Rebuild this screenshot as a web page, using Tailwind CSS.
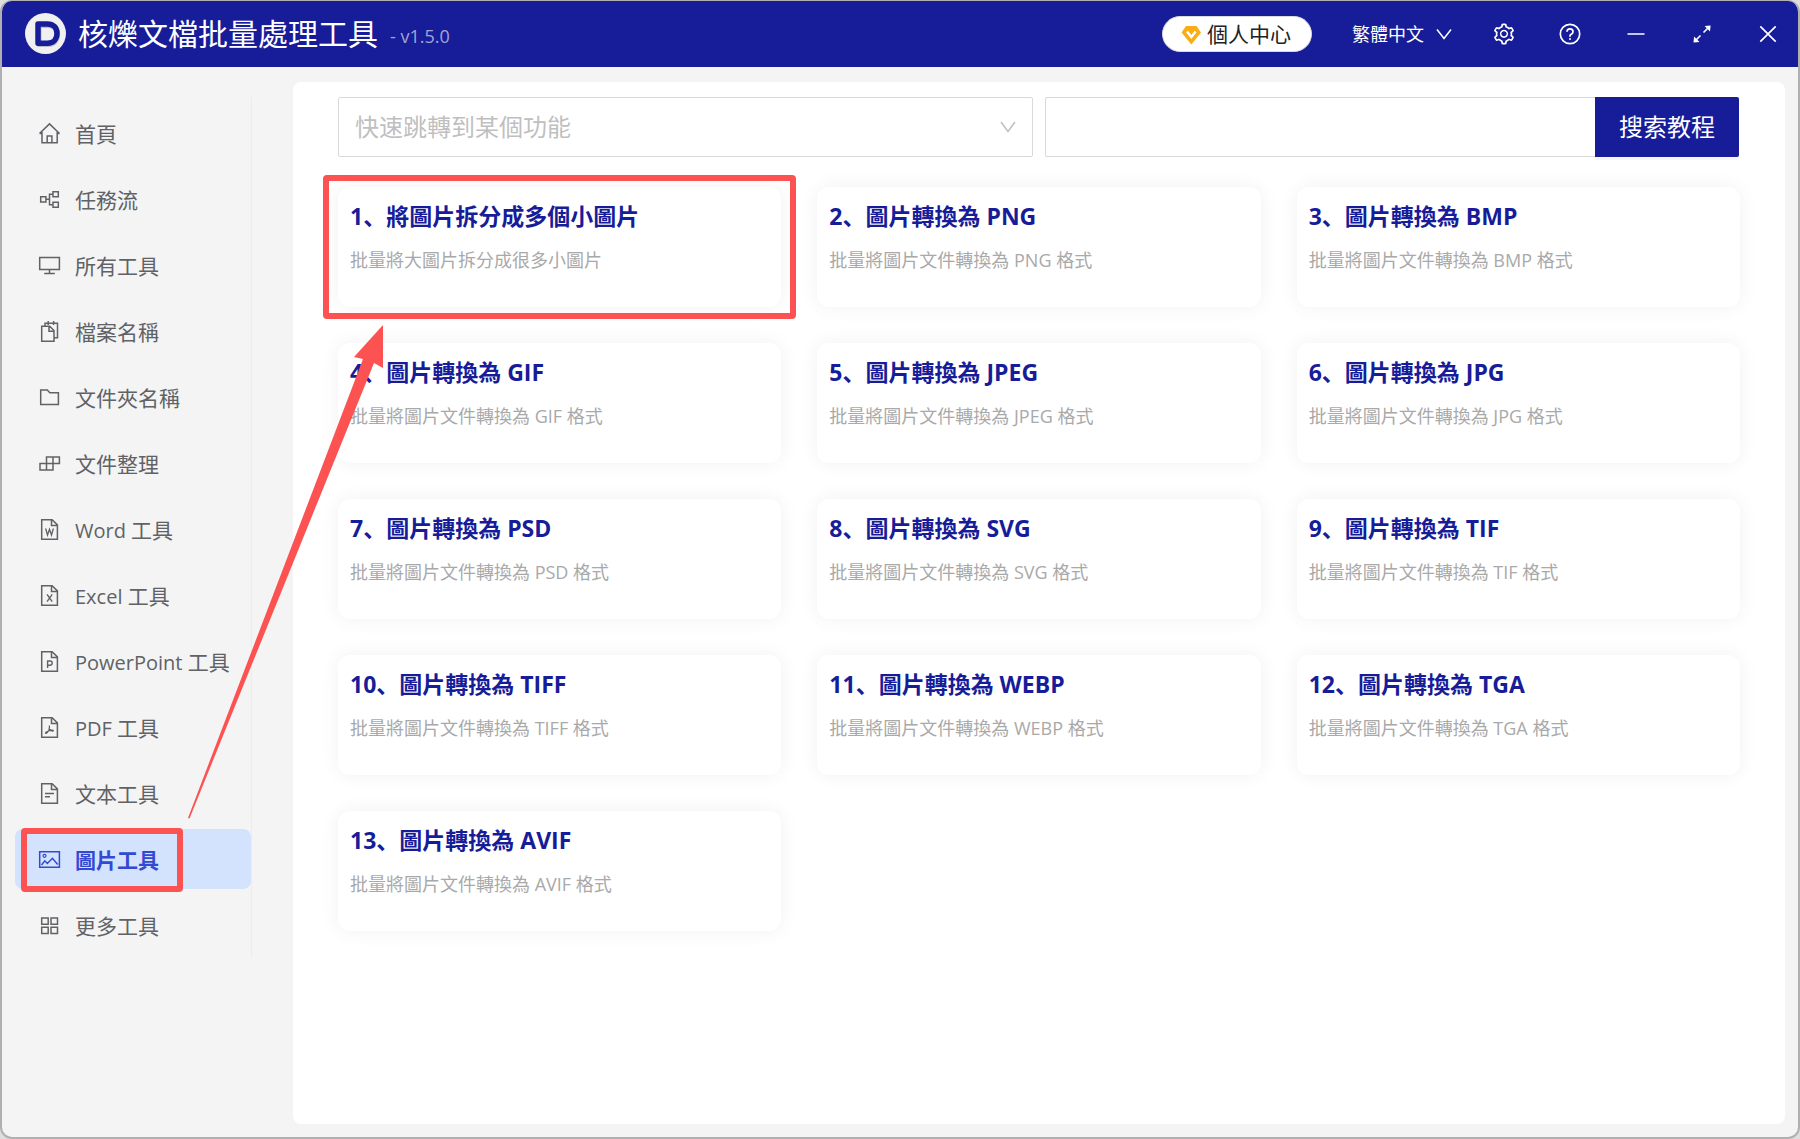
<!DOCTYPE html>
<html lang="zh-CN">
<head>
<meta charset="utf-8">
<meta name="viewport" content="width=device-width, initial-scale=1">
<title>核爍文檔批量處理工具</title>
<script src="https://cdn.jsdelivr.net/npm/@tailwindcss/browser@4"></script>
</head>
<body class="bg-[#dedede] font-['Open_Sans','Noto_Sans_CJK_SC',sans-serif]">
<div class="relative flex min-h-screen flex-col overflow-hidden rounded-xl border-2 border-t border-[#b0b0b0] bg-[#f4f4f4]">

  <header class="flex h-[66px] shrink-0 items-center bg-[#171c98] pl-[22px] pr-1.5 text-white">
    <svg class="size-[42px] shrink-0" viewBox="0 0 42 42" fill="none" aria-hidden="true">
      <circle cx="21.500" cy="20.500" r="20.500" fill="#f0f0f0"/>
      <path d="M15 12.500h9c6 0 9.500 3.500 9.500 9s-3.500 10-9.500 10h-9z" stroke="#b9b9c4" stroke-width="5" stroke-linejoin="round"/>
      <path d="M14 11h9.500c6 0 9.500 3.700 9.500 9.300s-3.500 10-9.500 10H14z" stroke="#171c98" stroke-width="5.500" stroke-linejoin="round"/>
    </svg>
    <h1 class="ml-3 text-[30px] leading-10">核爍文檔批量處理工具</h1>
    <span class="ml-3 mt-1 text-lg leading-6 text-[#a2a4d6]">- v1.5.0</span>

    <button type="button" class="ml-auto flex h-9 w-[150px] items-center rounded-full border border-[#d9d9d9] bg-white pl-4 text-[21px] leading-8 text-[#222222]">
      <svg class="size-6 shrink-0" viewBox="0 0 24 24" aria-hidden="true">
        <path d="M7 4h10.500l4.500 6.500L12.300 22.500 2.500 10.500z" fill="#faad14"/>
        <path d="M8 9.500l4.300 5.500 4.300-5.500" fill="none" stroke="#fff" stroke-width="2.400"/>
      </svg>
      <span class="ml-1">個人中心</span>
    </button>
    <div class="relative ml-10">
      <select aria-label="語言" class="w-[100px] appearance-none bg-transparent text-lg leading-8 text-white">
        <option>繁體中文</option>
      </select>
      <svg class="pointer-events-none absolute right-0 top-2 size-4" viewBox="0 0 16 16" fill="none" stroke="currentColor" stroke-width="1.500" aria-hidden="true"><path d="M1 3.500l7 9 7-9"/></svg>
    </div>
    <div class="ml-7 flex items-center gap-[18px]">
      <button type="button" aria-label="設定" class="flex size-12 items-center justify-center">
        <svg class="size-6" viewBox="0 0 1024 1024" fill="currentColor" aria-hidden="true"><path d="M924.8 625.7l-65.5-56c3.100-19 4.700-38.400 4.700-57.800s-1.600-38.800-4.700-57.800l65.500-56a32.030 32.030 0 009.300-35.200l-.9-2.600a443.740 443.740 0 00-79.700-137.900l-1.800-2.100a32.120 32.120 0 00-35.100-9.500l-81.300 28.900c-30-24.600-63.500-44-99.700-57.600l-15.700-85a32.050 32.050 0 00-25.800-25.700l-2.700-.5c-52.100-9.400-106.900-9.400-159 0l-2.700.5a32.050 32.050 0 00-25.800 25.700l-15.800 85.400a351.860 351.860 0 00-99 57.400l-81.900-29.100a32 32 0 00-35.100 9.500l-1.800 2.100a446.020 446.020 0 00-79.700 137.900l-.9 2.600c-4.500 12.500-.8 26.500 9.300 35.200l66.300 56.600c-3.100 18.800-4.600 38-4.600 57.100 0 19.200 1.500 38.400 4.600 57.100L99 625.500a32.030 32.030 0 00-9.300 35.200l.9 2.600c18.100 50.400 44.900 96.900 79.700 137.900l1.800 2.100a32.120 32.120 0 0035.100 9.500l81.900-29.100c29.800 24.500 63.100 43.900 99 57.400l15.800 85.400a32.050 32.050 0 0025.800 25.700l2.700.5a449.400 449.400 0 00159 0l2.700-.5a32.050 32.050 0 0025.800-25.700l15.700-85a350 350 0 0099.700-57.600l81.300 28.900a32 32 0 0035.100-9.500l1.800-2.100c34.800-41.100 61.600-87.500 79.700-137.900l.9-2.600c4.500-12.300.8-26.300-9.300-35zM788.3 465.900c2.500 15.100 3.800 30.600 3.800 46.100s-1.300 31-3.800 46.100l-6.600 40.100 74.700 63.900a370.030 370.030 0 01-42.600 73.600L721 702.800l-31.400 25.800c-23.900 19.600-50.500 35-79.300 45.800l-38.100 14.300-17.900 97a377.500 377.500 0 01-85 0l-17.900-97.200-37.800-14.500c-28.500-10.800-55-26.200-78.700-45.700l-31.400-25.900-93.400 33.200c-17-22.900-31.200-47.600-42.600-73.600l75.500-64.500-6.500-40c-2.400-14.900-3.700-30.300-3.700-45.500 0-15.300 1.200-30.600 3.700-45.500l6.500-40-75.500-64.500c11.300-26.100 25.600-50.700 42.600-73.600l93.400 33.200 31.400-25.900c23.700-19.500 50.200-34.900 78.700-45.700l37.900-14.300 17.900-97.200c28.100-3.200 56.800-3.200 85 0l17.900 97 38.100 14.300c28.700 10.800 55.400 26.200 79.300 45.800l31.400 25.800 92.800-32.900c17 22.900 31.200 47.600 42.600 73.600L781.800 426l6.500 39.900zM512 326c-97.200 0-176 78.800-176 176s78.800 176 176 176 176-78.800 176-176-78.800-176-176-176zm79.200 255.200A111.600 111.600 0 01512 614c-29.900 0-58-11.700-79.200-32.800A111.600 111.600 0 01400 502c0-29.900 11.700-58 32.800-79.200C454 401.600 482.100 390 512 390c29.900 0 58 11.600 79.200 32.800A111.600 111.600 0 01624 502c0 29.900-11.700 58-32.800 79.200z"/></svg>
      </button>
      <button type="button" aria-label="說明" class="flex size-12 items-center justify-center">
        <svg class="size-6" viewBox="0 0 24 24" fill="none" stroke="currentColor" stroke-width="1.700" aria-hidden="true"><circle cx="12" cy="12" r="9.700"/><path d="M9 9.800c0-1.700 1.300-2.900 3-2.900s3 1.200 3 2.800c0 1.300-.8 2.100-1.800 2.600-.8.400-1.200.9-1.200 1.600v.8"/><circle cx="12" cy="17" r="1" fill="currentColor" stroke="none"/></svg>
      </button>
      <button type="button" aria-label="最小化" class="flex size-12 items-center justify-center">
        <svg class="size-6" viewBox="0 0 24 24" stroke="currentColor" stroke-width="1.700" aria-hidden="true"><path d="M3.500 12h17"/></svg>
      </button>
      <button type="button" aria-label="最大化" class="flex size-12 items-center justify-center">
        <svg class="size-6" viewBox="0 0 24 24" fill="currentColor" stroke="currentColor" stroke-width="1.600" aria-hidden="true"><path d="M13.500 10.500l5-5M10.500 13.500l-5 5"/><path stroke="none" d="M20.600 3.500l-.6 6-5.400-5.400zM3.500 20.500l.6-6 5.400 5.400z"/></svg>
      </button>
      <button type="button" aria-label="關閉" class="flex size-12 items-center justify-center">
        <svg class="size-6" viewBox="0 0 24 24" stroke="currentColor" stroke-width="1.700" aria-hidden="true"><path d="M4.300 4.300l15.400 15.400M19.700 4.300L4.300 19.700"/></svg>
      </button>
    </div>
  </header>

  <div class="flex grow pb-[13px] pr-[13px] pt-[15px]">
    <aside class="w-[291px] shrink-0 pl-[13px] pt-[15px]">
      <nav class="flex w-[237px] flex-col gap-1.5 border-r border-[#ececec] pb-0.5 pt-1.5 text-[21px] leading-8 text-[#606266]">
        <a href="#" class="flex h-[60px] items-center gap-[13px] rounded-lg pl-[23px]">
          <svg class="size-6 shrink-0" viewBox="0 0 24 24" fill="none" stroke="currentColor" stroke-width="1.500" aria-hidden="true"><path d="M1.500 12.500L11.500 2.900l10 9.600M4 11v10.700h15.200V11M1.500 12.500H4m15.200 0h2.300M9.200 21.700V15h4.700v6.700"/></svg>
          <span class="pt-0.5">首頁</span></a>
        <a href="#" class="flex h-[60px] items-center gap-[13px] rounded-lg pl-[23px]">
          <svg class="size-6 shrink-0" viewBox="0 0 24 24" fill="none" stroke="currentColor" stroke-width="1.500" aria-hidden="true"><path d="M2.700 9.700h5.200v5.200H2.700zM15 4.700h5.300v5H15zM15 15.200h5.300v5H15zM7.900 12.300h3.600M15 7.200h-3.500v10.500H15"/></svg>
          <span class="pt-0.5">任務流</span></a>
        <a href="#" class="flex h-[60px] items-center gap-[13px] rounded-lg pl-[23px]">
          <svg class="size-6 shrink-0" viewBox="0 0 24 24" fill="none" stroke="currentColor" stroke-width="1.500" aria-hidden="true"><path d="M1.700 4.500h19.700v12H1.700zM11.500 16.500v4M6.200 20.500h10.600"/></svg>
          <span class="pt-0.5">所有工具</span></a>
        <a href="#" class="flex h-[60px] items-center gap-[13px] rounded-lg pl-[23px]">
          <svg class="size-6 shrink-0" viewBox="0 0 24 24" fill="none" stroke="currentColor" stroke-width="1.500" aria-hidden="true"><path d="M3.700 7.300h8L16 11.500v10.800H3.700zM11 7.300v4.900h5M7 7V4.300h12.500v14.400h-3M10.200 2v4M15.600 2v4"/></svg>
          <span class="pt-0.5">檔案名稱</span></a>
        <a href="#" class="flex h-[60px] items-center gap-[13px] rounded-lg pl-[23px]">
          <svg class="size-6 shrink-0" viewBox="0 0 24 24" fill="none" stroke="currentColor" stroke-width="1.500" aria-hidden="true"><path d="M2.700 5h6.600l2.500 2.700h8.600v11.800H2.700z"/></svg>
          <span class="pt-0.5">文件夾名稱</span></a>
        <a href="#" class="flex h-[60px] items-center gap-[13px] rounded-lg pl-[23px]">
          <svg class="size-6 shrink-0" viewBox="0 0 24 24" fill="none" stroke="currentColor" stroke-width="1.500" aria-hidden="true"><path d="M8.500 6h12.900v6.500H8.500zM2 12.500h13V19H2zM15 6v6.500M8.500 12.500V19"/></svg>
          <span class="pt-0.5">文件整理</span></a>
        <a href="#" class="flex h-[60px] items-center gap-[13px] rounded-lg pl-[23px]">
          <svg class="size-6 shrink-0" viewBox="0 0 24 24" fill="none" stroke="currentColor" stroke-width="1.500" aria-hidden="true"><path d="M3.700 2.700h10.400l5.300 5.200v14.400H3.700zM13.500 2.700v5.700h5.900"/><path stroke-width="1.300" d="M7.600 11.500l1.900 6.500 2-5.800 2 5.800 1.900-6.500"/></svg>
          <span class="pt-0.5"><span class="text-xl">Word </span>工具</span></a>
        <a href="#" class="flex h-[60px] items-center gap-[13px] rounded-lg pl-[23px]">
          <svg class="size-6 shrink-0" viewBox="0 0 24 24" fill="none" stroke="currentColor" stroke-width="1.500" aria-hidden="true"><path d="M3.700 2.700h10.400l5.300 5.200v14.400H3.700zM13.500 2.700v5.700h5.900"/><path stroke-width="1.400" d="M9 11.300l5.200 7.400M14.200 11.300L9 18.700"/></svg>
          <span class="pt-0.5"><span class="text-xl">Excel </span>工具</span></a>
        <a href="#" class="flex h-[60px] items-center gap-[13px] rounded-lg pl-[23px]">
          <svg class="size-6 shrink-0" viewBox="0 0 24 24" fill="none" stroke="currentColor" stroke-width="1.500" aria-hidden="true"><path d="M3.700 2.700h10.400l5.300 5.200v14.400H3.700zM13.500 2.700v5.700h5.900"/><path stroke-width="1.400" d="M9.600 19v-7h2.500c1.300 0 2.100.8 2.100 2.100s-.8 2.100-2.100 2.100H9.600"/></svg>
          <span class="pt-0.5"><span class="text-xl">PowerPoint </span>工具</span></a>
        <a href="#" class="flex h-[60px] items-center gap-[13px] rounded-lg pl-[23px]">
          <svg class="size-6 shrink-0" viewBox="0 0 24 24" fill="none" stroke="currentColor" stroke-width="1.500" aria-hidden="true"><path d="M3.700 2.700h10.400l5.300 5.200v14.400H3.700zM13.500 2.700v5.700h5.900"/><path stroke-width="1.200" d="M11.300 10.500c.5 1.800.3 3.500-.6 5-.8 1.500-1.700 2.600-2.700 3-.8.100-.7-.9.300-1.500 2-1.200 4.200-1.900 6.300-1.800 1.100.1.900 1 0 .9-1.700-.3-3.300-1.800-3.700-3.600"/></svg>
          <span class="pt-0.5"><span class="text-xl">PDF </span>工具</span></a>
        <a href="#" class="flex h-[60px] items-center gap-[13px] rounded-lg pl-[23px]">
          <svg class="size-6 shrink-0" viewBox="0 0 24 24" fill="none" stroke="currentColor" stroke-width="1.500" aria-hidden="true"><path d="M3.700 2.700h10.400l5.300 5.200v14.400H3.700zM13.500 2.700v5.700h5.900M7 12.500h9M7 15.800h5"/></svg>
          <span class="pt-0.5">文本工具</span></a>
        <a href="#" aria-current="page" class="relative flex h-[60px] items-center gap-[13px] rounded-lg bg-[#d3e2fd] pl-[23px] font-bold text-[#3349d4]">
          <svg class="size-6 shrink-0" viewBox="0 0 24 24" fill="none" stroke="currentColor" stroke-width="1.500" aria-hidden="true"><path d="M1.700 4.800h19.700v15.400H1.700zM3.500 18l3.300-4.200 2.500 2.700 5.200-5.200 5.200 6.200"/><circle cx="6.500" cy="8.800" r="1.500" stroke-width="1.200"/></svg>
          <span class="pt-0.5">圖片工具</span>
          <span class="absolute -top-px left-1.5 h-16 w-[162px] rounded-sm border-[6px] border-[#fc5251]"></span></a>
        <a href="#" class="flex h-[60px] items-center gap-[13px] rounded-lg pl-[23px]">
          <svg class="size-6 shrink-0" viewBox="0 0 24 24" fill="none" stroke="currentColor" stroke-width="1.500" aria-hidden="true"><path d="M3.700 5h6.500v6.300H3.700zM13 5h6.500v6.300H13zM3.700 14.200h6.500v6.300H3.700zM13 14.200h6.500v6.300H13z"/></svg>
          <span class="pt-0.5">更多工具</span></a>
      </nav>
    </aside>

    <main class="grow rounded-lg bg-white px-[45px] pb-[45px] pt-[15px]">
      <div class="mr-px grid grid-cols-2 gap-3">
        <div class="relative">
          <select aria-label="快速跳轉到某個功能" class="h-[60px] w-full appearance-none rounded-xs border border-[#d9d9d9] bg-white px-4 text-2xl text-[#bfbfbf]">
            <option>快速跳轉到某個功能</option>
          </select>
          <svg class="pointer-events-none absolute right-[17px] top-[22px] size-4" viewBox="0 0 16 16" fill="none" stroke="#bfbfbf" stroke-width="1.500" aria-hidden="true"><path d="M1 3l7 9.500L15 3"/></svg>
        </div>
        <form class="flex">
          <input type="text" aria-label="搜索教程" class="h-[60px] min-w-0 grow rounded-l-xs border border-r-0 border-[#d9d9d9] bg-white px-4 text-2xl">
          <button type="button" class="w-36 shrink-0 rounded-r-xs bg-[#171c98] text-2xl text-white shadow-[0_3px_0_rgba(0,0,0,0.04)]">搜索教程</button>
        </form>
      </div>

      <div class="mt-[30px] grid grid-cols-3 gap-9">
        <a href="#" class="relative h-[120px] rounded-xl bg-white px-3 py-[13px] shadow-[0_0_20px_rgba(0,0,0,0.06)]">
          <h2 class="text-[23px] font-bold leading-8 text-[#171c98]">1、將圖片拆分成多個小圖片</h2>
          <p class="mt-3 text-lg leading-8 text-[#a9a9a9]">批量將大圖片拆分成很多小圖片</p>
          <span class="absolute -inset-x-[15px] -inset-y-3 rounded-sm border-[6px] border-[#fc5251]"></span></a>
        <a href="#" class="h-[120px] rounded-xl bg-white px-3 py-[13px] shadow-[0_0_20px_rgba(0,0,0,0.06)]">
          <h2 class="text-[23px] font-bold leading-8 text-[#171c98]">2、圖片轉換為 PNG</h2>
          <p class="mt-3 text-lg leading-8 text-[#a9a9a9]">批量將圖片文件轉換為 PNG 格式</p></a>
        <a href="#" class="h-[120px] rounded-xl bg-white px-3 py-[13px] shadow-[0_0_20px_rgba(0,0,0,0.06)]">
          <h2 class="text-[23px] font-bold leading-8 text-[#171c98]">3、圖片轉換為 BMP</h2>
          <p class="mt-3 text-lg leading-8 text-[#a9a9a9]">批量將圖片文件轉換為 BMP 格式</p></a>
        <a href="#" class="h-[120px] rounded-xl bg-white px-3 py-[13px] shadow-[0_0_20px_rgba(0,0,0,0.06)]">
          <h2 class="text-[23px] font-bold leading-8 text-[#171c98]">4、圖片轉換為 GIF</h2>
          <p class="mt-3 text-lg leading-8 text-[#a9a9a9]">批量將圖片文件轉換為 GIF 格式</p></a>
        <a href="#" class="h-[120px] rounded-xl bg-white px-3 py-[13px] shadow-[0_0_20px_rgba(0,0,0,0.06)]">
          <h2 class="text-[23px] font-bold leading-8 text-[#171c98]">5、圖片轉換為 JPEG</h2>
          <p class="mt-3 text-lg leading-8 text-[#a9a9a9]">批量將圖片文件轉換為 JPEG 格式</p></a>
        <a href="#" class="h-[120px] rounded-xl bg-white px-3 py-[13px] shadow-[0_0_20px_rgba(0,0,0,0.06)]">
          <h2 class="text-[23px] font-bold leading-8 text-[#171c98]">6、圖片轉換為 JPG</h2>
          <p class="mt-3 text-lg leading-8 text-[#a9a9a9]">批量將圖片文件轉換為 JPG 格式</p></a>
        <a href="#" class="h-[120px] rounded-xl bg-white px-3 py-[13px] shadow-[0_0_20px_rgba(0,0,0,0.06)]">
          <h2 class="text-[23px] font-bold leading-8 text-[#171c98]">7、圖片轉換為 PSD</h2>
          <p class="mt-3 text-lg leading-8 text-[#a9a9a9]">批量將圖片文件轉換為 PSD 格式</p></a>
        <a href="#" class="h-[120px] rounded-xl bg-white px-3 py-[13px] shadow-[0_0_20px_rgba(0,0,0,0.06)]">
          <h2 class="text-[23px] font-bold leading-8 text-[#171c98]">8、圖片轉換為 SVG</h2>
          <p class="mt-3 text-lg leading-8 text-[#a9a9a9]">批量將圖片文件轉換為 SVG 格式</p></a>
        <a href="#" class="h-[120px] rounded-xl bg-white px-3 py-[13px] shadow-[0_0_20px_rgba(0,0,0,0.06)]">
          <h2 class="text-[23px] font-bold leading-8 text-[#171c98]">9、圖片轉換為 TIF</h2>
          <p class="mt-3 text-lg leading-8 text-[#a9a9a9]">批量將圖片文件轉換為 TIF 格式</p></a>
        <a href="#" class="h-[120px] rounded-xl bg-white px-3 py-[13px] shadow-[0_0_20px_rgba(0,0,0,0.06)]">
          <h2 class="text-[23px] font-bold leading-8 text-[#171c98]">10、圖片轉換為 TIFF</h2>
          <p class="mt-3 text-lg leading-8 text-[#a9a9a9]">批量將圖片文件轉換為 TIFF 格式</p></a>
        <a href="#" class="h-[120px] rounded-xl bg-white px-3 py-[13px] shadow-[0_0_20px_rgba(0,0,0,0.06)]">
          <h2 class="text-[23px] font-bold leading-8 text-[#171c98]">11、圖片轉換為 WEBP</h2>
          <p class="mt-3 text-lg leading-8 text-[#a9a9a9]">批量將圖片文件轉換為 WEBP 格式</p></a>
        <a href="#" class="h-[120px] rounded-xl bg-white px-3 py-[13px] shadow-[0_0_20px_rgba(0,0,0,0.06)]">
          <h2 class="text-[23px] font-bold leading-8 text-[#171c98]">12、圖片轉換為 TGA</h2>
          <p class="mt-3 text-lg leading-8 text-[#a9a9a9]">批量將圖片文件轉換為 TGA 格式</p></a>
        <a href="#" class="h-[120px] rounded-xl bg-white px-3 py-[13px] shadow-[0_0_20px_rgba(0,0,0,0.06)]">
          <h2 class="text-[23px] font-bold leading-8 text-[#171c98]">13、圖片轉換為 AVIF</h2>
          <p class="mt-3 text-lg leading-8 text-[#a9a9a9]">批量將圖片文件轉換為 AVIF 格式</p></a>
      </div>
    </main>
  </div>

  <!-- Arrow from the active menu entry to the highlighted card -->
  <svg class="pointer-events-none absolute left-[186px] top-[324px] h-[494px] w-[196px]" viewBox="0 0 196 494" fill="#fc5251" aria-hidden="true"><path d="M195 0v43l-9-5L1.500 493.500 0 493 175 34l-9-2z"/></svg>
</div>
</body>
</html>
